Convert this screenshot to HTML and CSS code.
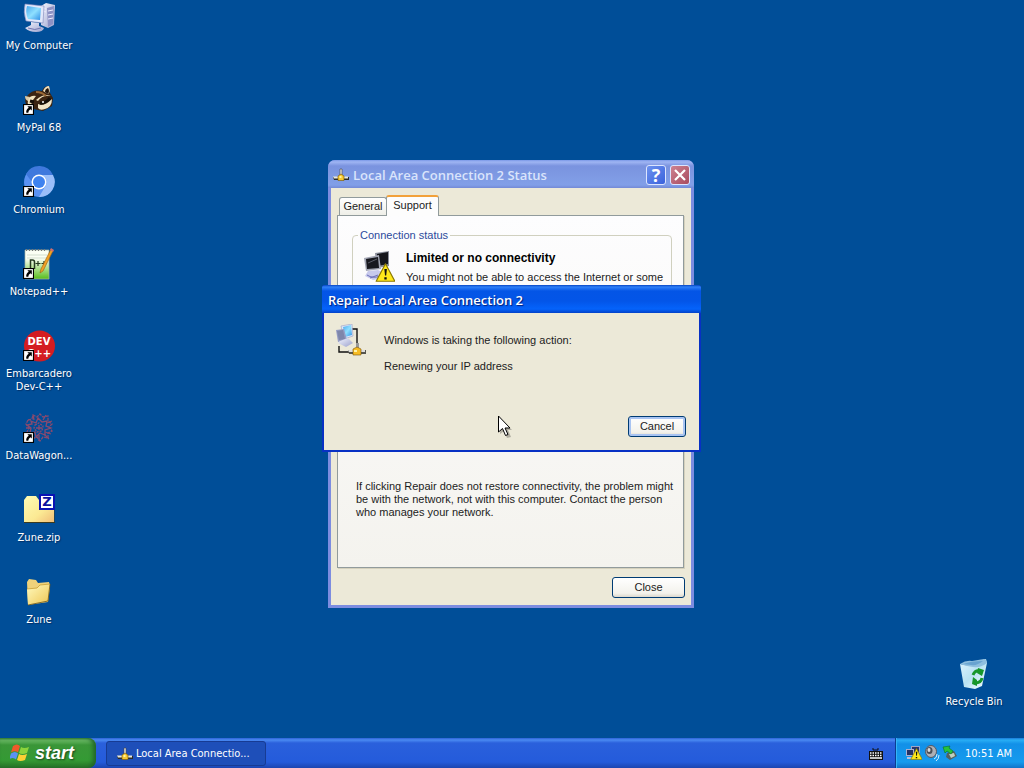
FILE: index.html
```html
<!DOCTYPE html>
<html lang="en">
<head>
<meta charset="utf-8">
<title>Desktop</title>
<link rel="stylesheet" href="styles.css">
</head>
<body>
<svg class="defs" aria-hidden="true">
  <defs>
    <linearGradient id="screen" x1="0" y1="0" x2="1" y2="1"><stop offset="0" stop-color="#4aa8ee"/><stop offset=".5" stop-color="#8fe0ff"/><stop offset="1" stop-color="#2f8fe6"/></linearGradient>
    <linearGradient id="case" x1="0" y1="0" x2="1" y2="1"><stop offset="0" stop-color="#f4f6ff"/><stop offset="1" stop-color="#9aa0cc"/></linearGradient>
    <linearGradient id="folder" x1="0" y1="0" x2="1" y2="1"><stop offset="0" stop-color="#fffbc0"/><stop offset="1" stop-color="#eec552"/></linearGradient>
    <linearGradient id="zip" x1="0" y1="0" x2="1" y2="1"><stop offset="0" stop-color="#fffcb4"/><stop offset=".6" stop-color="#fbe993"/><stop offset="1" stop-color="#f0bd78"/></linearGradient>
    <linearGradient id="page" x1="0" y1="0" x2="0" y2="1"><stop offset=".3" stop-color="#fbfff4"/><stop offset="1" stop-color="#58bd1b"/></linearGradient>
    <linearGradient id="bin" x1="0" y1="0" x2="1" y2="1"><stop offset="0" stop-color="#dff4ff"/><stop offset=".5" stop-color="#b9e2f2"/><stop offset="1" stop-color="#f4fdff"/></linearGradient>
    <symbol id="shortcut" viewBox="0 0 10 10"><path d="M0 0h10v10H0z" fill="#000"/><path d="M1 1h8v8H1z" fill="#fff"/><path d="M4 2h4v4L6.800 4.800Q4.800 6 4.800 8H3Q2.500 5 5.200 3.300z" fill="#000"/></symbol>
    <symbol id="plug" viewBox="0 0 16 16"><path d="M7 2h2v6H7z" fill="#e8e8e8" stroke="#444" stroke-width=".6"/><path d="M0 10h16v3H1z" fill="#2c2c28"/><path d="M0 9.500h5v2H1zM11 9.500h4v2h-4z" fill="#e9e9dc"/><path d="M5 9l3-2 3 2v4.500H5z" fill="#f6c832" stroke="#775500" stroke-width=".6"/><path d="M6.500 9h2v2h-2z" fill="#fff3a0"/></symbol>
    <symbol id="warning" viewBox="0 0 18 18"><path d="M9 1.500L17 16.500H1z" fill="#ffe81a" stroke="#8b7900" stroke-linejoin="round"/><path d="M8 6h2.200l-.6 5.500h-1zM8 13h2v2H8z" fill="#111"/></symbol>
  </defs>
</svg>

<main class="desktop">
  <nav class="shortcuts" aria-label="Desktop icons">
    <a class="shortcut" href="#">
      <svg class="icon" viewBox="0 0 32 32" aria-hidden="true">
        <path d="M18 4l5-3 9 2-1 20-6 3-7-3z" fill="url(#case)"/><path d="M24 6l7-2-1 18-5 3z" fill="#8d91c4"/><path d="M19 6l4 1M19 9l4 1M25 9l5-1M25 13l5-1M25 17l5-1" stroke="#eef"/>
        <path d="M2 2L21 4l-1 17L3 19Q0 10 2 2z" fill="#e2e8fa" stroke="#7c83b8" stroke-width=".6"/><path d="M4 4l14 2-1 12-12-1Q2 10 4 4z" fill="url(#screen)"/>
        <path d="M8 20l8 1v3l5 2q-1 4-8 4T2 26l6-3z" fill="url(#case)"/><path d="M5 26q7 3 13 0" fill="none" stroke="#7376b0"/>
      </svg>
      <span class="label">My Computer</span>
    </a>
    <a class="shortcut" href="#">
      <svg class="icon" viewBox="0 0 32 32" aria-hidden="true">
        <path d="M4 12Q1 15 3 20l7 5 10 2 9-5 1-8-3-5-1-7q-5 0-7 5-9-2-15 5z" fill="#3b2412"/><path d="M26 2q-4 0-6 5l5 3q3-2 1-8z" fill="#f0e0bd"/><path d="M25 4q-3 1-3 4l3 2q2-3 0-6z" fill="#21130b"/><path d="M2 12l5 1-2 4q-3-1-3-5z" fill="#ddcba7"/><path d="M5 16q2-5 8-4l-3 4-3 7q-3-1-2-7zM13 16q8-7 15-4-9-1-13 5z" fill="#efe1bd"/><path d="M15 20q6 3 14-5 0 8-7 10-5 2-7-1z" fill="#f2e6c8"/><path d="M17 19q5 1 10-5M7 17l4 1" fill="none" stroke="#161009" stroke-width="3"/><path d="M13 8q6 0 10 4" stroke="#9a6937" stroke-width="2" fill="none"/><circle cx="20" cy="18" r="1" fill="#fff"/>
        <use href="#shortcut" x="0" y="20" width="11" height="11"/>
      </svg>
      <span class="label">MyPal 68</span>
    </a>
    <a class="shortcut" href="#">
      <svg class="icon" viewBox="0 0 32 32" aria-hidden="true">
        <circle cx="16" cy="16" r="15" fill="#5a92f2"/><path d="M3 8A15 15 0 0 1 30 9H16q-5 0-7 7z" fill="#3f79dd"/><path d="M30 9a15 15 0 0 1-14 22l7-12q2-6-4-10z" fill="#9abef9"/><circle cx="16" cy="16" r="7.500" fill="#fff"/><circle cx="16" cy="16" r="6" fill="#3e82ef"/>
        <use href="#shortcut" x="0" y="20" width="11" height="11"/>
      </svg>
      <span class="label">Chromium</span>
    </a>
    <a class="shortcut" href="#">
      <svg class="icon" viewBox="0 0 32 32" aria-hidden="true">
        <path d="M2 2h24v29H2z" fill="url(#page)" stroke="#a9b4a2" stroke-width=".7"/><path d="M3 2h20" stroke="#777" stroke-width="2" stroke-dasharray="1 2"/><path d="M4 7h20M4 10h20" stroke="#d3dfcf"/><path d="M7.500 21v-9h2q2 0 2 2v7" fill="none" stroke="#263a20" stroke-width="1.500"/><path d="M12.500 15.500h5M15 13v5M18.500 15.500h5M21 13v5" stroke="#263a20" stroke-width="1.200"/><path d="M28 1l2 2-10 20-3 2 1-4z" fill="#f1a127" stroke="#99600b" stroke-width=".6"/><path d="M27 2l3 2 1-2-3-2z" fill="#cc6d70"/>
        <use href="#shortcut" x="0" y="20" width="11" height="11"/>
      </svg>
      <span class="label">Notepad++</span>
    </a>
    <a class="shortcut" href="#">
      <svg class="icon" viewBox="0 0 32 32" aria-hidden="true">
        <circle cx="16.500" cy="16" r="15.500" fill="#d41c22"/><text class="dev-mark" x="16" y="15">DEV</text><text class="dev-mark" x="16" y="27">C++</text>
        <use href="#shortcut" x="0" y="20" width="11" height="11"/>
      </svg>
      <span class="label">Embarcadero Dev-C++</span>
    </a>
    <a class="shortcut" href="#">
      <svg class="icon" viewBox="0 0 32 32" aria-hidden="true">
        <g fill="none" stroke="#a04a68" stroke-width="1.300" opacity=".85"><path d="M5 8l4-1 1-4 4 2 3-3 3 3 5-1v5l4 3-3 3 3 4-4 2v5l-5-1-3 4-3-4-5 2-1-5-4-2 2-4-3-4z" stroke-dasharray="3 1"/><path d="M8 9l5 2 2-5 4 4 5-1-1 5 5 2-6 2v5l-5-2-4 4-1-5-5 1 1-5-4-3 5-1z"/><path d="M12 13l4-2 4 3-1 5-5 1-3-4z" stroke-dasharray="2 1"/><path d="M3 16h5M10 3l1 5M23 3l-3 5M24 11l5-2M16 13v5M13 16h6M21 22l5 5M16 23v6M28 22l-6-2"/></g>
        <use href="#shortcut" x="0" y="20" width="11" height="11"/>
      </svg>
      <span class="label">DataWagon...</span>
    </a>
    <a class="shortcut" href="#">
      <svg class="icon" viewBox="0 0 32 32" aria-hidden="true">
        <path d="M1 6l3-4h9l3 4h15v22H1z" fill="url(#zip)"/><path d="M1 28.500h31V12" fill="none" stroke="#3b3a1e" stroke-width="1"/><path d="M17 1h14v14H17z" fill="#fff" stroke="#0a12b4" stroke-width="2"/><text class="zip-mark" x="24" y="12">Z</text>
      </svg>
      <span class="label">Zune.zip</span>
    </a>
    <a class="shortcut" href="#">
      <svg class="icon" viewBox="0 0 32 32" aria-hidden="true">
        <path d="M4 6l2-3 7 1 2 3 11-1 1 5-2 15L5 29z" fill="#efd27a"/><path d="M4 13l10-1 3-3 10-1-2 17L5 29z" fill="url(#folder)"/><path d="M5 29l20-4 2-17" fill="none" stroke="#6d5518" stroke-width=".8"/><path d="M4 13l10-1 3-3 10-1" fill="none" stroke="#c99e34" stroke-width=".8"/>
      </svg>
      <span class="label">Zune</span>
    </a>
  </nav>

  <a class="shortcut recycle" href="#">
    <svg class="icon" viewBox="0 0 32 32" aria-hidden="true">
      <path d="M2 6q7 2 13 1 8-5 13-6l1 4-5 23-7 3-11-2z" fill="url(#bin)"/><path d="M2 6q6-4 12-3l12-2q2 0 3 4-6 5-14 4T2 6z" fill="#8fbfdf"/><path d="M5 6q8-3 20-3-6 5-12 4z" fill="#68a3d0"/>
      <g fill="none" stroke="#16962a" stroke-width="3"><path d="M15 17q2-5 7-4M24 20q-1 5-7 5"/></g><path d="M20 10l6 2-2 6-5-3zM19 22l-4-3-1 7 5 2z" fill="#16962a"/>
    </svg>
    <span class="label">Recycle Bin</span>
  </a>

  <section class="window status" aria-label="Local Area Connection 2 Status">
    <header class="titlebar">
      <svg class="small-icon" aria-hidden="true"><use href="#plug"/></svg>
      <h1 class="title">Local Area Connection 2 Status</h1>
      <button class="caption help" aria-label="Help">?</button>
      <button class="caption shut" aria-label="Close window"><svg viewBox="0 0 18 18" aria-hidden="true"><path d="M4 4l10 10M14 4L4 14" stroke="#fff" stroke-width="2.200"/></svg></button>
    </header>
    <div class="status-body">
      <div class="tabs" role="tablist">
        <button class="tab" role="tab" aria-selected="false">General</button>
        <button class="tab active" role="tab" aria-selected="true">Support</button>
      </div>
      <div class="panel" role="tabpanel">
        <fieldset class="group">
          <legend>Connection status</legend>
          <svg class="icon" viewBox="0 0 32 32" aria-hidden="true">
            <path d="M12 2l14-2v15l-12 2z" fill="#8b8f9c"/><path d="M14 3l11-2v12l-10 2z" fill="#15161c"/><path d="M1 7l15-3 2 14-15 2z" fill="#a3a6b4"/><path d="M3 8l12-2 1 11-12 1z" fill="#17181e"/><path d="M5 12l9-4" stroke="#5a5d68"/><path d="M5 20l10-1 6 3-1 5-10 2-8-4z" fill="#c7c9ec"/><path d="M4 24q6 4 13 1M7 27l8-3" fill="none" stroke="#6d70b8"/><use href="#warning" x="12" y="11" width="21" height="21"/>
          </svg>
          <div>
            <h2 class="state">Limited or no connectivity</h2>
            <p class="detail">You might not be able to access the Internet or some</p>
          </div>
        </fieldset>
        <p class="advice">If clicking Repair does not restore connectivity, the problem might be with the network, not with this computer. Contact the person who manages your network.</p>
      </div>
      <button class="button">Close</button>
    </div>
  </section>

  <section class="window repair" role="dialog" aria-label="Repair Local Area Connection 2">
    <header class="titlebar"><h1 class="title">Repair Local Area Connection 2</h1></header>
    <div class="repair-body">
      <div class="action">
        <svg class="icon" viewBox="0 0 32 32" aria-hidden="true">
          <path d="M15 5h7v15M4 22v6h12" fill="none" stroke="#111" stroke-width="1.400"/><path d="M6 2l11-2 1 12-9 3z" fill="#dfe5f8" stroke="#8b93bd" stroke-width=".5"/><path d="M8 3l8-2 1 10-7 2z" fill="url(#screen)"/><path d="M1 6l8-1 3 11-9 2z" fill="#959cc4"/><path d="M2 7l6-1 2 9-6 1z" fill="#7e86ab"/><path d="M5 17l8-3 5 5-7 4-8-4z" fill="url(#case)"/><path d="M21 19h3v6h-3z" fill="#999"/><path d="M13 26h18v4H14z" fill="#55554e"/><path d="M13 26h17v2H14z" fill="#ddd"/><path d="M18 25l4-2 4 2v6h-8z" fill="#f7bc24" stroke="#77520b" stroke-width=".6"/><path d="M19 26h3v2h-3z" fill="#fff2a4"/>
        </svg>
        <div class="messages"><p>Windows is taking the following action:</p><p>Renewing your IP address</p></div>
      </div>
      <button class="button focused">Cancel</button>
    </div>
  </section>

  <svg class="cursor" viewBox="0 0 15 23" aria-hidden="true"><path d="M2 3v16l4-3 3 7 4-1-3-7h4z" fill="#000" opacity=".25"/><path d="M.5 1v16l4-3.500 3 7 2.500-1-3-6.500h5z" fill="#fff" stroke="#000"/></svg>
</main>

<footer class="taskbar">
  <button class="start">
    <svg viewBox="0 0 20 20" aria-hidden="true"><path d="M3 3q4-3 7 0L8 9.500Q5 7 1 9.500z" fill="#f05a2a"/><path d="M11 4q3 2 8 0l-2 6q-5 2-8 0z" fill="#8bd33c"/><path d="M1 10.500q4-3 7 0l-2 6q-3-3-7 0z" fill="#5b92f3"/><path d="M9 11q3 2 8 0l-2 6q-5 2-8 0z" fill="#fcd034"/></svg>
    <span>start</span>
  </button>
  <button class="task"><svg class="small-icon" aria-hidden="true"><use href="#plug"/></svg><span>Local Area Connectio...</span></button>
  <button class="keyboard" aria-label="On-screen keyboard"><svg viewBox="0 0 14 12" aria-hidden="true"><path d="M4 0v2h5V0" fill="none" stroke="#111"/><path d="M0 3h14v9H0z" fill="#111"/><path d="M1 5h12M1 7.500h12" stroke="#fff" stroke-width="1.500" stroke-dasharray="1.500 1"/><path d="M1 10h12" stroke="#fff" stroke-width="1.500"/></svg></button>
  <div class="tray">
    <svg class="small-icon" viewBox="0 0 16 16" aria-hidden="true"><path d="M5 1h9v7H5z" fill="#9da5c8"/><path d="M6 2h7v5H6z" fill="#27366c"/><path d="M0 4h8v7H0z" fill="#a8b0d0"/><path d="M1 5h6v5H1z" fill="#253263"/><path d="M1 12h7v2H1z" fill="#b8bedb"/><use href="#warning" x="4" y="2" width="13" height="14"/></svg>
    <svg class="small-icon" viewBox="0 0 16 16" aria-hidden="true"><ellipse cx="7" cy="6.500" rx="5.500" ry="6" fill="#aeb0b5" stroke="#555963"/><ellipse cx="5.500" cy="5.500" rx="3" ry="3.500" fill="#4d5057"/><ellipse cx="5" cy="5" rx="1.500" ry="2" fill="#d9dadd"/><path d="M10 14q3-1 3-5M12 16q3-2 3-6" stroke="#d6efff" fill="none"/></svg>
    <svg class="small-icon" viewBox="0 0 16 16" aria-hidden="true"><path d="M5 8l7-2 3 5-7 4-4-3z" fill="#55605d"/><path d="M7 9l5-1 1 3-4 2z" fill="#c1cfbf"/><path d="M1 2l7-1-1 2 4 3-2 3-4-3-2 2z" fill="#26c33b" stroke="#087226" stroke-width=".6"/></svg>
    <time class="clock">10:51 AM</time>
  </div>
</footer>
</body>
</html>
```

FILE: styles.css
```css
* { box-sizing: border-box; }

body {
  margin: 0;
  min-height: 100vh;
  display: flex;
  flex-direction: column;
  overflow: hidden;
  background: #004e98;
  font: 11px/13px "Liberation Sans", Arial, sans-serif;
  color: #1c1c1c;
}

button { font: inherit; color: inherit; padding: 0; }
h1, h2, p { margin: 0; }
svg { display: block; flex: none; }

.defs { position: absolute; width: 0; height: 0; }
.icon { width: 32px; height: 32px; }
.small-icon { width: 16px; height: 16px; }

.desktop { position: relative; flex: 1; }

.shortcuts {
  display: grid;
  grid-auto-rows: 82px;
  width: 78px;
  padding-top: 2px;
}

.shortcut {
  display: flex;
  flex-direction: column;
  align-items: center;
  gap: 5px;
  color: #fff;
  text-decoration: none;
  text-align: center;
  font-family: "DejaVu Sans Condensed", Tahoma, sans-serif;
}

.label { text-shadow: 1px 1px 1px #002f66; }

.recycle { position: absolute; right: 11px; top: 658px; width: 78px; }

.dev-mark { font: bold 10px "DejaVu Sans", sans-serif; fill: #fff; text-anchor: middle; }
.zip-mark { font: bold 13px "DejaVu Sans", sans-serif; fill: #0a12a0; text-anchor: middle; }

.window { position: absolute; display: flex; flex-direction: column; }

.titlebar {
  display: flex;
  align-items: center;
  height: 28px;
  gap: 4px;
}

.title {
  flex: 1;
  font: 600 13px/18px "Open Sans", "Trebuchet MS", sans-serif;
}

.status {
  left: 328px;
  top: 160px;
  width: 366px;
  padding: 0 3px 3px;
  background: #7c8ce0;
  border-radius: 7px 7px 0 0;
}

.status .titlebar {
  margin: 0 -3px;
  padding: 2px 4px 0 5px;
  border-radius: 7px 7px 0 0;
  background: linear-gradient(#7b98e8 0, #9fb5f3 2px, #7a93df 6px, #7f9be4 18px, #819fe8 25px, #7389d6 28px);
}

.status .title { color: #dae4fb; }

.caption {
  width: 20px;
  height: 20px;
  border: 1px solid #dce5ff;
  border-radius: 3px;
  color: #fff;
}

.caption svg { width: 18px; height: 18px; }
.help { background: linear-gradient(135deg, #6d92ee, #3a62dc); font: bold 18px/18px "Open Sans", sans-serif; }
.shut { background: linear-gradient(135deg, #ce8291, #a84b5f); }

.status-body {
  display: flex;
  flex-direction: column;
  padding: 7px 7px 7px 6px;
  background: #ece9d8;
}

.tabs { display: flex; align-items: flex-end; padding-left: 2px; }

.tab {
  width: 48px;
  height: 18px;
  border: 1px solid #919b9c;
  border-bottom: 0;
  border-radius: 3px 3px 0 0;
  background: linear-gradient(#fff, #efefe8);
}

.tab.active {
  position: relative;
  width: 53px;
  height: 21px;
  margin: 0 0 -1px -1px;
  padding-bottom: 2px;
  border-top: 2px solid #f2a13a;
  background: #fdfdfd;
}

.panel {
  height: 353px;
  padding: 13px 11px 0 14px;
  border: 1px solid #919b9c;
  background: linear-gradient(#fdfdfe, #f4f3ee);
  box-shadow: 1px 1px 0 #d5d1bd;
  display: flex;
  flex-direction: column;
}

.group {
  display: flex;
  gap: 11px;
  height: 210px;
  min-width: 0;
  margin: 0;
  padding: 9px 10px;
  border: 1px solid #d0d0bf;
  border-radius: 4px;
}

.group legend { margin-left: -5px; padding: 0 2px; color: #2c4a9c; }
.state { font: bold 12px/14px "Liberation Sans", Arial, sans-serif; color: #000; }
.detail { margin-top: 6px; white-space: nowrap; }
.advice { margin: 41px -8px 0 4px; }

.button {
  width: 73px;
  height: 21px;
  border: 1px solid #003c74;
  border-radius: 3px;
  background: linear-gradient(#fff, #f3f2ec 80%, #dcd8cc);
}

.status .button { align-self: flex-end; margin: 9px -1px 0 0; }

.repair {
  left: 322px;
  top: 285px;
  width: 379px;
  padding: 0 2px 2px;
  background: #0831c4;
  border-radius: 3px 3px 0 0;
}

.repair .titlebar {
  margin: 0 -2px;
  padding: 2px 6px 0;
  border-radius: 3px 3px 0 0;
  background: linear-gradient(#0645c4 0, #2f80f8 2px, #0455e6 6px, #0355e8 16px, #0463fb 24px, #0341c8 28px);
}

.repair .title { color: #fff; text-shadow: 1px 1px 1px #00207a; }

.repair-body {
  display: flex;
  flex-direction: column;
  justify-content: space-between;
  min-height: 137px;
  padding: 11px 13px 13px 11px;
  background: #ece9d8;
}

.action { display: flex; gap: 17px; }
.messages { display: grid; gap: 13px; padding-top: 10px; }
.focused { align-self: flex-end; width: 58px; box-shadow: inset 0 0 0 2px #a9c4f2; }

.cursor { position: absolute; left: 498px; top: 415px; width: 15px; height: 23px; }

.taskbar {
  display: flex;
  align-items: stretch;
  height: 30px;
  background: linear-gradient(#2c62d8 0, #4a8af2 2px, #2a60dc 5px, #245bdb 24px, #1c45b0 30px);
  color: #fff;
  font-family: "DejaVu Sans Condensed", Tahoma, sans-serif;
}

.start {
  display: flex;
  align-items: center;
  gap: 5px;
  width: 96px;
  padding-left: 10px;
  border: 0;
  border-radius: 0 8px 8px 0;
  background: linear-gradient(#3d8b3d 0, #6cbb66 2px, #3a9638 7px, #349a34 22px, #277427 30px);
  box-shadow: inset -3px 0 4px #22662a;
  color: #fff;
  font: italic bold 18px/22px "Liberation Sans", Arial, sans-serif;
  text-shadow: 1px 1px 2px #1c431c;
}

.start svg { width: 20px; height: 20px; }

.task {
  display: flex;
  align-items: center;
  gap: 3px;
  width: 160px;
  margin: 3px 0 2px 10px;
  padding-left: 10px;
  border: 1px solid #173b93;
  border-radius: 3px;
  background: #1e4fb9;
  color: #fff;
}

.keyboard { margin: 2px 12px 0 auto; border: 0; background: none; }
.keyboard svg { width: 14px; height: 12px; }

.tray {
  display: flex;
  align-items: center;
  gap: 2px;
  width: 129px;
  padding-left: 10px;
  border-left: 1px solid #0b3d91;
  background: linear-gradient(#1a7ad8 0, #29aef5 2px, #1290e8 6px, #159bee 24px, #1173c8 30px);
  box-shadow: inset 1px 0 #35b5f8;
}

.clock { margin-left: 5px; white-space: nowrap; }
```
